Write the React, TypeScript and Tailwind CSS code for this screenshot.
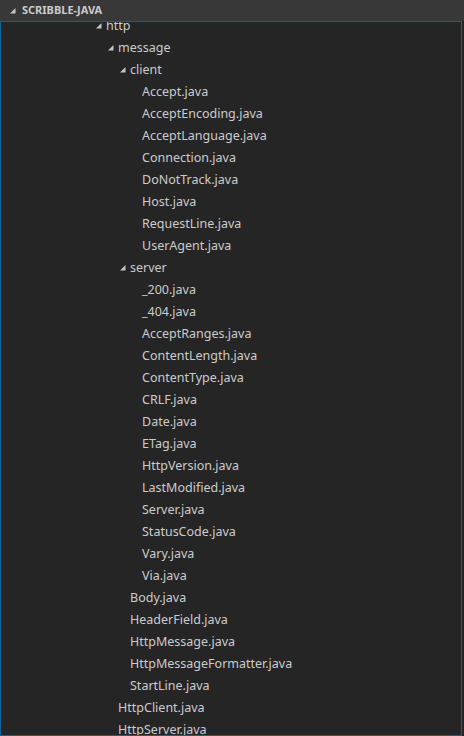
import React from 'react'

type Row = { name: string; level: number; dir?: boolean }

const rows: Row[] = [
  { name: 'http', level: 0, dir: true },
  { name: 'message', level: 1, dir: true },
  { name: 'client', level: 2, dir: true },
  { name: 'Accept.java', level: 3 },
  { name: 'AcceptEncoding.java', level: 3 },
  { name: 'AcceptLanguage.java', level: 3 },
  { name: 'Connection.java', level: 3 },
  { name: 'DoNotTrack.java', level: 3 },
  { name: 'Host.java', level: 3 },
  { name: 'RequestLine.java', level: 3 },
  { name: 'UserAgent.java', level: 3 },
  { name: 'server', level: 2, dir: true },
  { name: '_200.java', level: 3 },
  { name: '_404.java', level: 3 },
  { name: 'AcceptRanges.java', level: 3 },
  { name: 'ContentLength.java', level: 3 },
  { name: 'ContentType.java', level: 3 },
  { name: 'CRLF.java', level: 3 },
  { name: 'Date.java', level: 3 },
  { name: 'ETag.java', level: 3 },
  { name: 'HttpVersion.java', level: 3 },
  { name: 'LastModified.java', level: 3 },
  { name: 'Server.java', level: 3 },
  { name: 'StatusCode.java', level: 3 },
  { name: 'Vary.java', level: 3 },
  { name: 'Via.java', level: 3 },
  { name: 'Body.java', level: 2 },
  { name: 'HeaderField.java', level: 2 },
  { name: 'HttpMessage.java', level: 2 },
  { name: 'HttpMessageFormatter.java', level: 2 },
  { name: 'StartLine.java', level: 2 },
  { name: 'HttpClient.java', level: 1 },
  { name: 'HttpServer.java', level: 1 },
]

// indent per level, row content starts at 94px for the top level
const indent = ['pl-[93px]', 'pl-[105px]', 'pl-[117px]', 'pl-[129px]']

const Twistie = () => (
  <svg width="12" height="12" viewBox="0 0 12 12" className="shrink-0">
    <polygon points="7.5,3 7.5,8.5 2,8.5" fill="#c5c5c5" />
  </svg>
)

export default function App() {
  return (
    <div
      className="w-[464px] h-[736px] bg-[#252526] flex flex-col overflow-hidden text-[#cccccc]"
      style={{ fontFamily: '"Noto Sans", "Open Sans", sans-serif' }}
    >
      <div className="h-[21px] shrink-0 bg-[#383838] flex items-center pl-[8px]">
        <Twistie />
        <span className="ml-[2px] text-[11px] font-bold text-[#cccccc]">SCRIBBLE-JAVA</span>
      </div>
      <div className="flex-1 mr-[2px] border border-[#0e639c] overflow-hidden">
        <div className="-mt-[7px]">
          {rows.map((r, i) => (
            <div key={i} className={`h-[22px] flex items-center text-[12.5px] ${indent[r.level]}`}>
              {r.dir ? <Twistie /> : <span className="w-[12px] shrink-0" />}
              <span className="whitespace-nowrap">{r.name}</span>
            </div>
          ))}
        </div>
      </div>
    </div>
  )
}
